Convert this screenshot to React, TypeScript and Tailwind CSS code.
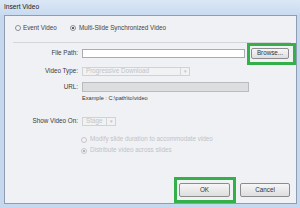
import React from 'react';

const font = { fontFamily: '"Liberation Sans", Arial, sans-serif' };

const Radio = ({ checked, disabled }: { checked?: boolean; disabled?: boolean }) => (
  <span
    className={`flex h-[6px] w-[6px] shrink-0 items-center justify-center rounded-full border ${
      disabled ? 'border-[#c4c6ca] bg-[#f2f3f5]' : 'border-[#8b8e93] bg-[#f4f5f7]'
    }`}
  >
    {checked && <span className={`h-[2px] w-[2px] rounded-full ${disabled ? 'bg-[#9a9ea6]' : 'bg-[#2b2f36]'}`} />}
  </span>
);

const Label = ({ children }: { children: React.ReactNode }) => (
  <span className="w-[74px] shrink-0 pr-[1px] text-right text-[#3a3a3a]">{children}</span>
);

const WinButton = ({ children, width }: { children: React.ReactNode; width: string }) => (
  <button
    className={`${width} flex h-full items-center justify-center rounded-[2px] border border-[#8c8c8c] bg-gradient-to-b from-[#f6f6f6] to-[#dedede] text-[#333]`}
  >
    {children}
  </button>
);

export default function App() {
  return (
    <div className="flex h-[208px] w-[300px] flex-col bg-[#c5d8ee] text-[6.3px] leading-none" style={font}>
      {/* title bar */}
      <div className="flex h-[15px] items-center bg-gradient-to-b from-[#dbe7f6] to-[#c9dbf0] pl-[4px] text-[6.6px] text-[#1c1c1c]">
        Insert Video
      </div>

      {/* dialog body */}
      <div className="ml-[4px] mr-[3px] mb-[4px] flex flex-1 flex-col border border-[#8d9db2] bg-[#f0f1f5]">
        {/* mode radios */}
        <div className="mt-[7px] flex h-[10px] items-center pl-[10px] text-[#444]">
          <div className="flex w-[55px] items-center gap-[2px]">
            <Radio />
            <span>Event Video</span>
          </div>
          <div className="flex items-center gap-[3px]">
            <Radio checked />
            <span>Multi-Slide Synchronized Video</span>
          </div>
        </div>

        <div className="mt-[9px] ml-[8px] mr-[5px] h-px bg-[#d3d5da]" />

        {/* File Path */}
        <div className="mt-[5px] flex h-[11px] items-center gap-[3px]">
          <Label>File Path:</Label>
          <div className="h-[9px] w-[163px] border border-[#a9abb0] bg-white" />
          <div className="relative ml-[3px] h-[11px]">
            <WinButton width="w-[38px]">Browse...</WinButton>
            <div className="pointer-events-none absolute -top-[5px] -bottom-[6px] -left-[4px] -right-[7px] border-[3px] border-[#34b04b]" />
          </div>
        </div>

        {/* Video Type */}
        <div className="mt-[7px] flex h-[10px] items-center gap-[3px]">
          <Label>Video Type:</Label>
          <div className="flex h-[9px] w-[108px] items-center border border-[#d0d2d6] bg-[#f1f2f4] text-[#c2c4c8]">
            <span className="flex-1 pl-[3px]">Progressive Download</span>
            <span className="flex h-full w-[9px] items-center justify-center border-l border-[#d4d6da] text-[5px]">▾</span>
          </div>
        </div>

        {/* URL */}
        <div className="mt-[6px] flex h-[10px] items-center gap-[3px]">
          <Label>URL:</Label>
          <div className="h-[10px] w-[167px] border border-[#b9bbbf] bg-[#dcdddf]" />
        </div>

        {/* Example */}
        <div className="mt-[3px] flex h-[8px] items-center pl-[77px] text-[5.6px] text-[#333]">
          Example : C:\path\to\video
        </div>

        {/* Show Video On */}
        <div className="mt-[13px] flex h-[10px] items-center gap-[3px]">
          <Label>Show Video On:</Label>
          <div className="flex h-[9px] w-[34px] items-center border border-[#d0d2d6] bg-[#f1f2f4] text-[#c2c4c8]">
            <span className="flex-1 pl-[3px]">Stage</span>
            <span className="flex h-full w-[9px] items-center justify-center border-l border-[#d4d6da] text-[5px]">▾</span>
          </div>
        </div>

        {/* slide options */}
        <div className="mt-[9px] flex h-[9px] items-center gap-[3px] pl-[76px] text-[#c0c2c6]">
          <Radio disabled />
          <span>Modify slide duration to accommodate video</span>
        </div>
        <div className="mt-[2px] flex h-[9px] items-center gap-[3px] pl-[76px] text-[#c0c2c6]">
          <Radio checked disabled />
          <span>Distribute video across slides</span>
        </div>

        {/* buttons */}
        <div className="mt-auto mb-[6px] flex h-[14px] justify-end gap-[10px] pr-[6px]">
          <div className="relative h-full">
            <WinButton width="w-[51px]">OK</WinButton>
            <div className="pointer-events-none absolute -top-[6px] -bottom-[6px] -left-[5px] -right-[6px] border-[3px] border-[#34b04b]" />
          </div>
          <WinButton width="w-[50px]">Cancel</WinButton>
        </div>
      </div>
    </div>
  );
}
